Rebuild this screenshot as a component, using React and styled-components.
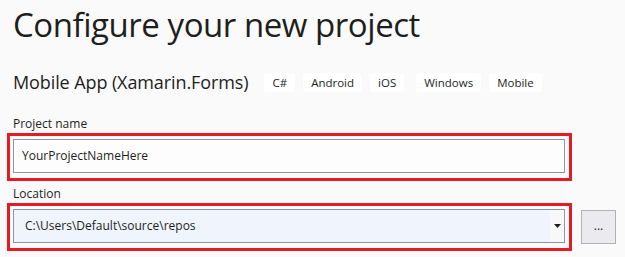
import React from 'react'
import styled, { createGlobalStyle } from 'styled-components'

const GlobalStyle = createGlobalStyle`
  html, body {
    margin: 0;
    padding: 0;
    background: #fafafa;
  }
  body {
    font-family: "Open Sans", "Noto Sans", sans-serif;
    color: #1e1e1e;
  }
`

const tags = ['C#', 'Android', 'iOS', 'Windows', 'Mobile']

export default function App() {
  return (
    <>
      <GlobalStyle />
      <Page>
        <Title>Configure your new project</Title>
        <TemplateRow>
          <Template>Mobile App (Xamarin.Forms)</Template>
          <Tags>
            {tags.map(t => <Tag key={t} spaced={t === 'Windows'}>{t}</Tag>)}
          </Tags>
        </TemplateRow>
        <Label top={23}>Project name</Label>
        <Row>
          <Highlight>
            <TextInput>YourProjectNameHere</TextInput>
          </Highlight>
        </Row>
        <Label top={4}>Location</Label>
        <Row>
          <Highlight>
            <Combo>
              <ComboText>C:\Users\Default\source\repos</ComboText>
              <Arrow>
                <svg width="7" height="4" viewBox="0 0 7 4">
                  <path d="M0 0h7L3.5 4z" fill="#1e1e1e" />
                </svg>
              </Arrow>
            </Combo>
          </Highlight>
          <Browse>...</Browse>
        </Row>
      </Page>
    </>
  )
}

const Page = styled.div`
  width: 625px;
  height: 257px;
  padding-left: 7px;
  box-sizing: border-box;
  overflow: hidden;
`

const Title = styled.h1`
  margin: 0;
  padding: 3px 0 0 6px;
  font-size: 33px;
  font-weight: 400;
  line-height: 44px;
  letter-spacing: -0.45px;
`

const TemplateRow = styled.div`
  display: flex;
  align-items: center;
  padding: 25px 0 0 6px;
  height: 20px;
`

const Template = styled.div`
  font-size: 18px;
  line-height: 20px;
  letter-spacing: -0.1px;
  margin-right: 16px;
`

const Tags = styled.div`
  display: flex;
  gap: 8px;
`

const Tag = styled.span`
  background: #ffffff;
  border-radius: 4px;
  height: 19px;
  padding: 0 8px;
  margin-left: ${p => (p.spaced ? '4px' : '0')};
  font-size: 11.5px;
  line-height: 19px;
`

const Label = styled.div`
  padding: ${p => p.top}px 0 0 6px;
  font-size: 12px;
  line-height: 17px;
  height: 17px;
`

const Row = styled.div`
  display: flex;
  align-items: center;
  margin-top: 1px;
`

const Highlight = styled.div`
  width: 565px;
  box-sizing: border-box;
  border: 3px solid #e31b23;
  padding: 3px 4px 5px 3px;
`

const TextInput = styled.div`
  height: 34px;
  box-sizing: border-box;
  border: 1px solid #8b95a6;
  background: #fdfdfd;
  padding-left: 8px;
  font-size: 12px;
  line-height: 32px;
`

const Combo = styled.div`
  display: flex;
  height: 34px;
  box-sizing: border-box;
  border: 1px solid #8b95a6;
  background: #f8f8f9;
`

const ComboText = styled.div`
  flex: 1;
  background: #f0f4fc;
  padding-left: 11px;
  font-size: 12px;
  line-height: 32px;
`

const Arrow = styled.div`
  width: 14px;
  display: flex;
  align-items: center;
  justify-content: center;
`

const Browse = styled.div`
  margin-left: 9px;
  width: 35px;
  height: 34px;
  box-sizing: border-box;
  border: 1px solid #b2b2b2;
  background: #ebebef;
  font-size: 12px;
  line-height: 30px;
  text-align: center;
`
